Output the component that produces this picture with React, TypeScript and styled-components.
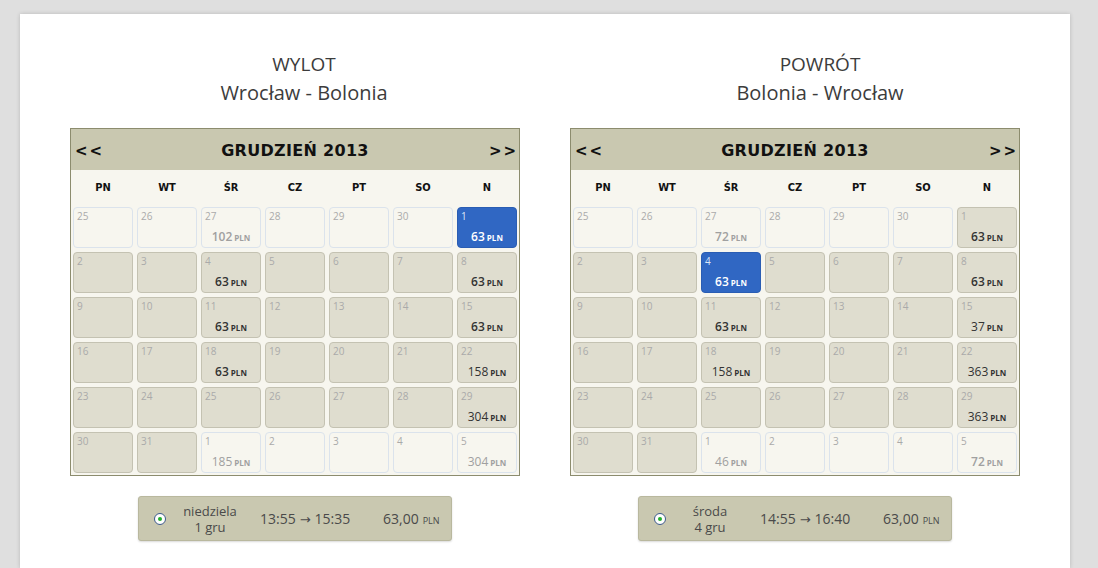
import React from "react";
import styled, { createGlobalStyle, css } from "styled-components";

const GlobalStyle = createGlobalStyle`
  html, body {
    margin: 0;
    padding: 0;
    background: #dfdfdf;
    font-family: "Open Sans", "Liberation Sans", sans-serif;
  }
`;

type Kind = "out" | "in" | "sel";

interface Day {
  day: number;
  kind: Kind;
  price?: number;
  cheap?: boolean;
}

interface Trip {
  label: string;
  route: string;
  shift: number;
  prices: Record<number, [number, boolean]>;
  selected: number;
  weekday: string;
  date: string;
  depart: string;
  arrive: string;
}

// index in the 42 cell grid -> [price, bold]
const trips: Trip[] = [
  {
    label: "WYLOT",
    route: "Wrocław - Bolonia",
    shift: 18,
    prices: {
      2: [102, true],
      6: [63, true],
      9: [63, true],
      13: [63, true],
      16: [63, true],
      20: [63, true],
      23: [63, true],
      27: [158, false],
      34: [304, false],
      37: [185, false],
      41: [304, false],
    },
    selected: 6,
    weekday: "niedziela",
    date: "1 gru",
    depart: "13:55",
    arrive: "15:35",
  },
  {
    label: "POWRÓT",
    route: "Bolonia - Wrocław",
    shift: 50,
    prices: {
      2: [72, true],
      6: [63, true],
      9: [63, true],
      13: [63, true],
      16: [63, true],
      20: [37, false],
      23: [158, false],
      27: [363, false],
      34: [363, false],
      37: [46, false],
      41: [72, true],
    },
    selected: 9,
    weekday: "środa",
    date: "4 gru",
    depart: "14:55",
    arrive: "16:40",
  },
];

const buildDays = (trip: Trip): Day[] => {
  const days: Day[] = [];
  for (let i = 0; i < 42; i++) {
    let day: number;
    let kind: Kind;
    if (i < 6) {
      day = 25 + i;
      kind = "out";
    } else if (i < 37) {
      day = i - 5;
      kind = "in";
    } else {
      day = i - 36;
      kind = "out";
    }
    if (i === trip.selected) kind = "sel";
    const p = trip.prices[i];
    days.push({ day, kind, price: p ? p[0] : undefined, cheap: p ? p[1] : false });
  }
  return days;
};

const weekdays = ["PN", "WT", "ŚR", "CZ", "PT", "SO", "N"];

const Page = styled.div`
  padding: 14px 28px 0 20px;
  min-height: 554px;
`;

const Sheet = styled.div`
  background: #fff;
  box-shadow: 0 0 4px rgba(0, 0, 0, 0.18);
  height: 554px;
  display: flex;
  gap: 50px;
  padding: 0 50px;
`;

const Column = styled.div`
  width: 450px;
  display: flex;
  flex-direction: column;
  align-items: center;
`;

const Titles = styled.div<{ $shift: number }>`
  width: 450px;
  padding: 37px 0 0 ${(p) => p.$shift}px;
  box-sizing: border-box;
  display: flex;
  flex-direction: column;
  align-items: center;
  color: #3c3c3c;
  height: 114px;
`;

const Label = styled.div`
  font-size: 19px;
  line-height: 26px;
`;

const Route = styled.div`
  font-size: 20px;
  line-height: 32px;
`;

const Calendar = styled.div`
  width: 450px;
  box-sizing: border-box;
  border: 1px solid #8c8c6e;
  background: #f7f6ef;
`;

const MonthBar = styled.div`
  height: 41px;
  background: #c9c8b0;
  display: flex;
  align-items: center;
  justify-content: space-between;
  padding: 2px 4px 0 4px;
  box-sizing: border-box;
  font-family: "DejaVu Sans", "Liberation Sans", sans-serif;
  font-weight: bold;
  color: #111;
`;

const Arrow = styled.span<{ $right?: boolean }>`
  font-size: 15px;
  letter-spacing: 2px;
  width: 26px;
  text-align: ${(p) => (p.$right ? "right" : "left")};
`;

const Month = styled.span`
  font-size: 16px;
  letter-spacing: 0.3px;
`;

const WeekRow = styled.div`
  height: 35px;
  display: grid;
  grid-template-columns: repeat(7, 60px);
  column-gap: 4px;
  padding: 0 2px;
  align-items: center;
`;

const WeekDay = styled.div`
  text-align: center;
  font-family: "DejaVu Sans Condensed", "DejaVu Sans", sans-serif;
  font-weight: bold;
  font-size: 11px;
  color: #111;
`;

const Grid = styled.div`
  display: grid;
  grid-template-columns: repeat(7, 60px);
  grid-auto-rows: 41px;
  gap: 4px;
  padding: 2px;
`;

const kinds = {
  out: css`
    background: #f7f6ef;
    border: 1px solid #dbe3ec;
    color: #a0a0a0;
  `,
  in: css`
    background: #dfddcf;
    border: 1px solid #c4c2b2;
    color: #333;
  `,
  sel: css`
    background: #3067c3;
    border: 1px solid #2a5db3;
    color: #fff;
  `,
};

const Cell = styled.div<{ $kind: Kind }>`
  box-sizing: border-box;
  border-radius: 4px;
  display: flex;
  flex-direction: column;
  justify-content: space-between;
  padding: 2px 3px 1px 3px;
  ${(p) => kinds[p.$kind]}
`;

const DayNum = styled.div<{ $kind: Kind }>`
  font-size: 10px;
  line-height: 12px;
  color: ${(p) => (p.$kind === "sel" ? "#dce6f7" : "#aaa")};
`;

const Price = styled.div<{ $bold: boolean }>`
  text-align: center;
  font-size: 12px;
  line-height: 16px;
  font-weight: ${(p) => (p.$bold ? 600 : 400)};
`;

const Unit = styled.span`
  font-size: 8px;
  font-weight: bold;
  margin-left: 2px;
`;

const Flight = styled.div`
  margin-top: 20px;
  width: 314px;
  height: 45px;
  box-sizing: border-box;
  background: #c9c8b0;
  border: 1px solid #b9b89e;
  border-radius: 3px;
  box-shadow: 0 1px 2px rgba(0, 0, 0, 0.15);
  display: flex;
  align-items: center;
  color: #4a4a4a;
  padding-left: 15px;
`;

const Radio = styled.span`
  width: 10px;
  height: 10px;
  border-radius: 50%;
  border: 1px solid #3d5a8a;
  background: #fff;
  display: flex;
  align-items: center;
  justify-content: center;
  &::after {
    content: "";
    width: 4px;
    height: 4px;
    border-radius: 50%;
    background: #22b02c;
  }
`;

const When = styled.div`
  width: 70px;
  margin-left: 9px;
  text-align: center;
  font-size: 13px;
  line-height: 16px;
`;

const Times = styled.div`
  margin-left: 15px;
  font-size: 14px;
  width: 98px;
  white-space: nowrap;
`;

const TimeArrow = styled.span`
  font-family: "DejaVu Sans", sans-serif;
  font-size: 13px;
  margin: 0 4px;
`;

const Fare = styled.div`
  margin-left: 25px;
  font-size: 14px;
`;

const FareUnit = styled.span`
  font-size: 9px;
  margin-left: 4px;
`;

const TripColumn = ({ trip }: { trip: Trip }) => {
  const days = buildDays(trip);
  return (
    <Column>
      <Titles $shift={trip.shift}>
        <Label>{trip.label}</Label>
        <Route>{trip.route}</Route>
      </Titles>
      <Calendar>
        <MonthBar>
          <Arrow>&lt;&lt;</Arrow>
          <Month>GRUDZIEŃ 2013</Month>
          <Arrow $right>&gt;&gt;</Arrow>
        </MonthBar>
        <WeekRow>
          {weekdays.map((w) => (
            <WeekDay key={w}>{w}</WeekDay>
          ))}
        </WeekRow>
        <Grid>
          {days.map((d, i) => (
            <Cell key={i} $kind={d.kind}>
              <DayNum $kind={d.kind}>{d.day}</DayNum>
              {d.price !== undefined && (
                <Price $bold={!!d.cheap}>
                  {d.price}
                  <Unit>PLN</Unit>
                </Price>
              )}
            </Cell>
          ))}
        </Grid>
      </Calendar>
      <Flight>
        <Radio />
        <When>
          {trip.weekday}
          <br />
          {trip.date}
        </When>
        <Times>
          {trip.depart}
          <TimeArrow>→</TimeArrow>
          {trip.arrive}
        </Times>
        <Fare>
          63,00<FareUnit>PLN</FareUnit>
        </Fare>
      </Flight>
    </Column>
  );
};

const App = () => {
  return (
    <Page>
      <GlobalStyle />
      <Sheet>
        {trips.map((t) => (
          <TripColumn key={t.label} trip={t} />
        ))}
      </Sheet>
    </Page>
  );
};

export default App;
